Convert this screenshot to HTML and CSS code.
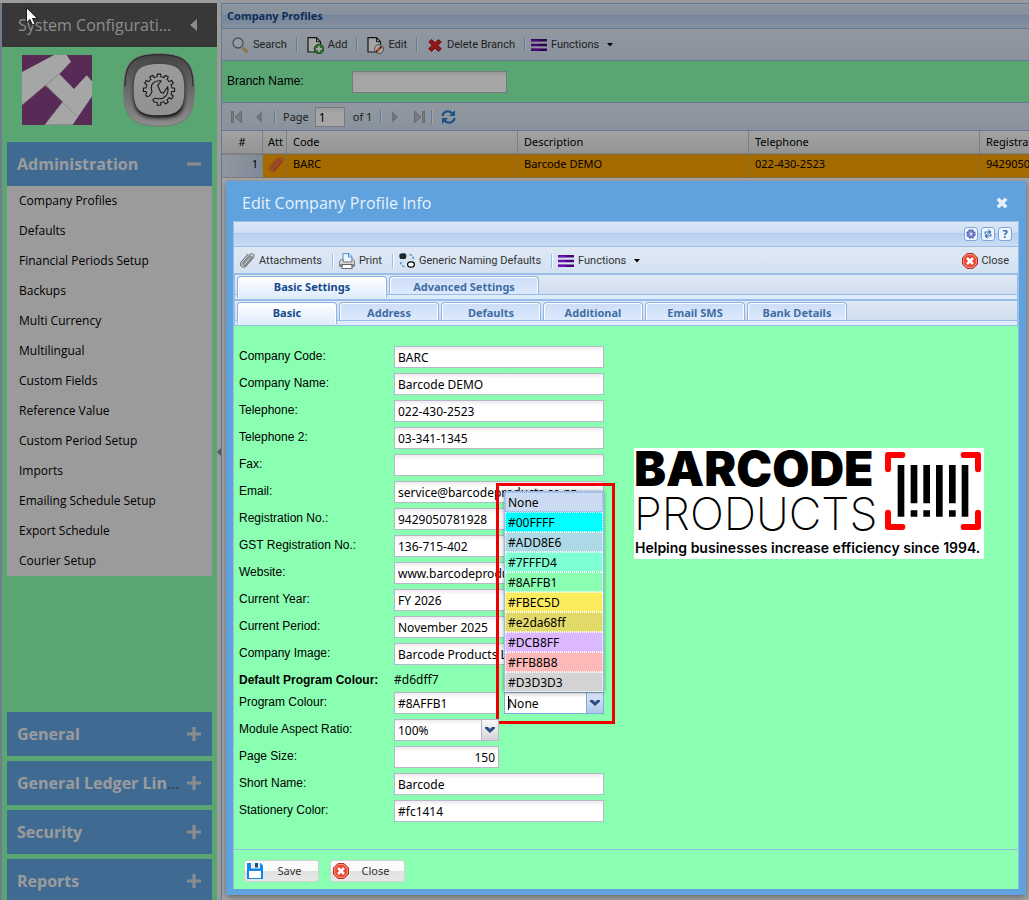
FILE: index.html
```html
<!DOCTYPE html>
<html lang="en">
<head>
<meta charset="utf-8">
<title>Company Profiles</title>
<link rel="stylesheet" href="styles.css">
</head>
<body>
<svg class="defs" aria-hidden="true">
  <symbol id="i-menu" viewBox="0 0 16 14"><path d="M0 1.500h16M0 7h16M0 12.500h16" stroke="#4b0082" stroke-width="3"/><path d="M0 1.500h8M0 7h8M0 12.500h8" stroke="#7a12c4" stroke-width="2"/></symbol>
  <symbol id="i-close" viewBox="0 0 16 16"><path d="M5 .5h6L15.500 5v6L11 15.500H5L.5 11V5z" fill="#e8452f" stroke="#b92c22"/><path d="M5.300 1.700h5.400L14.300 5.300v5.400L10.700 14.300H5.300L1.700 10.700V5.300z" fill="none" stroke="#f9a08f"/><path d="M5 5l6 6M11 5l-6 6" stroke="#fff" stroke-width="2.600"/></symbol>
  <symbol id="i-clip" viewBox="0 0 16 17"><path d="M5 11.500L11.300 4.600c.9-1 2.300.2 1.400 1.200L6.600 12.700c-1.600 1.700-4-.4-2.500-2.100L11 2.700c2.300-2.400 5.400.5 3.400 2.800L7.200 13.900c-2.800 3.200-7.500-.6-4.900-3.900L8.800 2.400" fill="none" stroke="currentColor" stroke-width="1.100" stroke-linecap="round"/></symbol>
  <symbol id="i-plus" viewBox="0 0 14 14"><path d="M1.500 7h11M7 1.500v11" stroke="currentColor" stroke-width="3.200" stroke-linecap="square"/></symbol>
  <symbol id="i-chevron" viewBox="0 0 10 8"><path d="M0 1h3l2 2 2-2h3v1.500L5 7 0 2.500z" fill="#2f4a86"/></symbol>
</svg>

<div class="app">
  <aside class="sidebar">
    <header class="sidebar-head"><h1>System Configurati...</h1>
      <svg width="7" height="12" viewBox="0 0 7 12"><path d="M7 0v12L0 6z" fill="#d8d8d8"/></svg></header>
    <div class="brand">
      <svg width="70" height="70" viewBox="66 165 210 210"><path d="M66 165h210v210H66z" fill="#874286"/><path d="M66 216l96-51h38l13 20-35 37 44 45 38-41 16 18v45l-58 85h-84l54-69-52-49-70 59z" fill="#fff"/><path d="M66 315l72-60 38-33M138 256l50 50 42 42M188 306l-54 69" fill="none" stroke="#bbb" stroke-width="2"/></svg>
      <svg width="72" height="74" viewBox="0 0 216 222">
        <defs><linearGradient id="g1" x2="0" y2="1"><stop offset="0" stop-color="#686868"/><stop offset=".5" stop-color="#a2a2a6"/><stop offset="1" stop-color="#dcdcdc"/></linearGradient>
        <linearGradient id="g2" x2="0" y2="1"><stop offset="0" stop-color="#efefef"/><stop offset="1" stop-color="#dedede"/></linearGradient>
        <filter id="soft" x="-20%" y="-20%" width="140%" height="140%"><feGaussianBlur stdDeviation="6"/></filter>
        <path id="tooth" d="M-10.100-37.700L-5.400-38.600-5.200-46.700H5.200L5.400-38.600 10.100-37.700"/></defs>
        <path d="M108 2C190 2 214 30 214 110S190 219 108 219 2 192 2 110 26 2 108 2z" fill="url(#g1)" stroke="#b4b4b4" stroke-width="3"/>
        <path d="M108 5C186 5 210 32 210 100M6 100C6 32 30 5 108 5" fill="none" stroke="#383838" stroke-width="3"/>
        <path d="M108 40C168 40 183 56 183 120S166 194 108 194 33 178 33 120 48 40 108 40z" fill="#000" filter="url(#soft)"/>
        <path d="M108 33C166 33 184 52 184 110S166 187 108 187 32 170 32 110 50 33 108 33z" fill="url(#g2)"/>
        <g transform="translate(108 110)" fill="none" stroke="#222" stroke-width="3.200" stroke-linejoin="round">
          <use href="#tooth" transform="rotate(-90)"/><use href="#tooth" transform="rotate(-60)"/><use href="#tooth" transform="rotate(-30)"/><use href="#tooth"/><use href="#tooth" transform="rotate(30)"/><use href="#tooth" transform="rotate(60)"/><use href="#tooth" transform="rotate(90)"/><use href="#tooth" transform="rotate(120)"/><use href="#tooth" transform="rotate(150)"/><use href="#tooth" transform="rotate(180)"/>
          <path d="M-37.700 10.100C-44 20-32 25-26 15L-21 6C-29-16-14-29 7-26L-4-13 5 8 13 11 26-9C31 14 16 30-3 27-10 25-18 26-18 31-18 36-14 38-10.100 37.700"/>
        </g>
      </svg>
    </div>
    <nav class="accordion">
      <button class="acc-head"><span>Administration</span><svg width="14" height="14" viewBox="0 0 14 14"><path d="M1.500 7h11" stroke="currentColor" stroke-width="3.200" stroke-linecap="square"/></svg></button>
      <ul class="acc-list">
        <li><a href="#">Company Profiles</a></li><li><a href="#">Defaults</a></li><li><a href="#">Financial Periods Setup</a></li><li><a href="#">Backups</a></li><li><a href="#">Multi Currency</a></li><li><a href="#">Multilingual</a></li><li><a href="#">Custom Fields</a></li><li><a href="#">Reference Value</a></li><li><a href="#">Custom Period Setup</a></li><li><a href="#">Imports</a></li><li><a href="#">Emailing Schedule Setup</a></li><li><a href="#">Export Schedule</a></li><li><a href="#">Courier Setup</a></li>
      </ul>
      <div class="acc-rest">
        <button class="acc-head"><span>General</span><svg width="14" height="14"><use href="#i-plus"/></svg></button>
        <button class="acc-head"><span>General Ledger Lin<i>...</i></span><svg width="14" height="14"><use href="#i-plus"/></svg></button>
        <button class="acc-head"><span>Security</span><svg width="14" height="14"><use href="#i-plus"/></svg></button>
        <button class="acc-head"><span>Reports</span><svg width="14" height="14"><use href="#i-plus"/></svg></button>
      </div>
    </nav>
  </aside>
  <div class="splitter"><svg width="4" height="8" viewBox="0 0 4 8"><path d="M4 0v8L0 4z" fill="#888"/></svg></div>

  <main class="panel">
    <h2 class="panel-title">Company Profiles</h2>
    <div class="toolbar main-tools">
      <button class="tool"><svg width="17" height="17" viewBox="0 0 17 17"><path d="M10.500 10.500l5 5" stroke="#d9b46a" stroke-width="3"/><circle cx="6" cy="6" r="5" fill="#e4effa" stroke="#6a7b9c" stroke-width="1.300"/></svg>Search</button><i class="sep"></i>
      <button class="tool"><svg width="17" height="17" viewBox="0 0 17 17"><path d="M1 .7h8.500l4 4V15H1z" fill="#fff" stroke="#222" stroke-width="1.200"/><path d="M9.500.7v4h4" fill="none" stroke="#222"/><circle cx="12" cy="12" r="4.800" fill="#46a84a" stroke="#247a30"/><path d="M12 9v6M9 12h6" stroke="#fff" stroke-width="1.800"/></svg>Add</button><i class="sep"></i>
      <button class="tool"><svg width="17" height="17" viewBox="0 0 17 17"><path d="M1 .7h8.500l4 4V15H1z" fill="#fff" stroke="#222" stroke-width="1.200"/><path d="M9.500.7v4h4" fill="none" stroke="#222"/><circle cx="12" cy="12" r="4.500" fill="#fff" stroke="#777"/><path d="M9.500 14.500l4-4" stroke="#e66a2a" stroke-width="2.200"/><path d="M13 11l1.500-1.500" stroke="#a22" stroke-width="2.200"/><path d="M9 15l1-1" stroke="#222" stroke-width="1.500"/></svg>Edit</button><i class="sep"></i>
      <button class="tool tool-delete"><svg width="14" height="13" viewBox="0 0 14 13"><path d="M.8 3L3.500.6 7 3.800 10.500.6 13.200 3 9.800 6.300l3.500 3.500-2.800 2.600L7 9l-3.500 3.400L.7 9.800l3.500-3.500z" fill="#e32424" stroke="#9e1212"/></svg>Delete Branch</button><i class="sep"></i>
      <button class="tool tool-menu"><svg width="16" height="12" viewBox="0 0 16 14" preserveAspectRatio="none"><use href="#i-menu" width="16" height="14"/></svg>Functions<svg class="caret" width="6" height="4" viewBox="0 0 6 4"><path d="M0 0h6L3 3.500z"/></svg></button>
    </div>
    <div class="filter"><label for="branch">Branch Name:</label><input class="field" id="branch" type="text"></div>
    <div class="toolbar paging">
      <button class="pg" aria-label="First page"><svg width="11" height="12" viewBox="0 0 11 12"><path d="M.5 0h2v12h-2zM10.500 0v12L4 6z" fill="#b9bfc8" stroke="#949aa5" stroke-width=".8"/></svg></button>
      <button class="pg pg-prev" aria-label="Previous page"><svg width="6" height="12" viewBox="0 0 6 12"><path d="M6 0v12L0 6z" fill="#a9b0ba"/></svg></button><i class="sep"></i>
      <label for="page">Page</label><input class="field page-no" id="page" type="text" value="1"><span class="of">of 1</span><i class="sep"></i>
      <button class="pg" aria-label="Next page"><svg width="6" height="12" viewBox="0 0 6 12"><path d="M0 0v12l6-6z" fill="#a9b0ba"/></svg></button>
      <button class="pg pg-last" aria-label="Last page"><svg width="11" height="12" viewBox="0 0 11 12"><path d="M8.500 0h2v12h-2zM.5 0v12L7 6z" fill="#b9bfc8" stroke="#949aa5" stroke-width=".8"/></svg></button><i class="sep"></i>
      <button class="pg pg-reload" aria-label="Refresh"><svg width="15" height="14" viewBox="0 0 15 14"><path d="M1.500 6C2 1.500 8-.5 11.500 3.500M13.500 8c-.5 4.500-6.500 6.500-10 2.500" fill="none" stroke="#2f7fd0" stroke-width="2.200"/><path d="M14 0v6H8zM1 14V8h6z" fill="#2f7fd0"/></svg></button>
    </div>
    <div class="grid-wrap">
      <table class="grid">
        <colgroup><col class="c-num"><col class="c-att"><col class="c-wide"><col class="c-wide"><col class="c-wide"><col class="c-wide"></colgroup>
        <thead><tr><th class="num">#</th><th class="att">Att</th><th>Code</th><th>Description</th><th>Telephone</th><th>Registration No.</th></tr></thead>
        <tbody><tr><td class="rownum">1</td><td class="att"><svg width="16" height="17" color="#e0584a"><use href="#i-clip"/></svg></td><td>BARC</td><td>Barcode DEMO</td><td>022-430-2523</td><td>9429050781928</td></tr></tbody>
      </table>
    </div>
  </main>
</div>
<div class="mask"></div>
<svg class="pointer" width="12" height="19" viewBox="0 0 12 19"><path d="M.5.700v15l3.500-3.200 2.500 5.500 2.500-1-2.500-5.500h5z" fill="#fff" stroke="#000" stroke-width=".8"/></svg>

<section class="window" role="dialog" aria-labelledby="win-title">
  <header class="win-head"><h2 id="win-title">Edit Company Profile Info</h2>
    <button class="win-close" aria-label="Close window"><svg width="12" height="12" viewBox="0 0 12 12"><path d="M1.800 1.800l8.400 8.400M10.200 1.800l-8.400 8.400" stroke="#e8f1fa" stroke-width="3.600"/></svg></button></header>
  <div class="win-body">
    <div class="strip">
      <button aria-label="Settings"><svg width="10" height="10" viewBox="0 0 10 10"><circle cx="5" cy="5" r="3.900" fill="#9aa3e0" stroke="#5964b0" stroke-width="1.600" stroke-dasharray="2 1.060"/><circle cx="5" cy="5" r="3" fill="#8f9ae0" stroke="#5c68b8" stroke-width=".8"/><circle cx="5" cy="5" r="1.100" fill="#e8ecff"/></svg></button>
      <button aria-label="Reload"><svg width="8" height="10" viewBox="0 0 8 10"><path d="M1.200 5.200V3H5M6.800 4.800V7H3" fill="none" stroke="#3f79b5" stroke-width="1.200"/><path d="M4.500 0l3 3-3 3zM3.500 4l-3 3 3 3z" fill="#3f79b5"/></svg></button>
      <button class="help">?</button>
    </div>
    <div class="toolbar win-tools">
      <button class="tool"><svg width="16" height="17" color="#777"><use href="#i-clip"/></svg>Attachments</button><i class="sep"></i>
      <button class="tool"><svg width="16" height="16" viewBox="0 0 16 16"><path d="M4 8V.6h6l3 2.900V8" fill="#eef6ff" stroke="#4a8fd0"/><path d="M9.500.6v3.500H13" fill="none" stroke="#4a8fd0"/><path d="M2.500 6.500h1.700V9h8.600V6.500h.7q2 .5 2 2.500v4.500H.5V9q0-2 2-2.500z" fill="#d4d4d4" stroke="#777" stroke-width=".9"/><path d="M1 12h14" stroke="#888" stroke-width="2"/><path d="M3.500 11.500h9l.8 4H2.700z" fill="#fff" stroke="#555" stroke-width=".9"/></svg>Print</button><i class="sep"></i>
      <button class="tool"><svg width="16" height="16" viewBox="0 0 16 16"><path d="M.5 1.500C1.500 0 6 0 7 1c.5 2 .5 4-.8 5H1.600C.3 5 .2 3 .5 1.500z" fill="#1c2730"/><ellipse cx="12" cy="11.500" rx="3.400" ry="2.700" fill="#fff" stroke="#000" stroke-width="1.200"/><path d="M10.500 1.500c2.500.5 3.500 2 4 5M1.500 9c.5 2.500 2 4.500 5 5" fill="none" stroke="#4c93cf" stroke-width="1.400" stroke-dasharray="2.500 1.500"/></svg>Generic Naming Defaults</button><i class="sep"></i>
      <button class="tool"><svg width="16" height="12" viewBox="0 0 16 14" preserveAspectRatio="none"><use href="#i-menu" width="16" height="14"/></svg>Functions<svg class="caret" width="6" height="4" viewBox="0 0 6 4"><path d="M0 0h6L3 3.500z"/></svg></button>
      <button class="tool push"><svg width="16" height="16"><use href="#i-close"/></svg>Close</button>
    </div>
    <div class="tabs tabs-outer" role="tablist"><button class="tab active" role="tab">Basic Settings</button><button class="tab" role="tab">Advanced Settings</button></div>
    <div class="tabs tabs-inner" role="tablist"><button class="tab active" role="tab">Basic</button><button class="tab" role="tab">Address</button><button class="tab" role="tab">Defaults</button><button class="tab" role="tab">Additional</button><button class="tab" role="tab">Email SMS</button><button class="tab" role="tab">Bank Details</button></div>
    <div class="content">
      <form class="form">
        <div class="row"><label for="f1">Company Code:</label><input class="field" id="f1" type="text" value="BARC"></div>
        <div class="row"><label for="f2">Company Name:</label><input class="field" id="f2" type="text" value="Barcode DEMO"></div>
        <div class="row"><label for="f3">Telephone:</label><input class="field" id="f3" type="text" value="022-430-2523"></div>
        <div class="row"><label for="f4">Telephone 2:</label><input class="field" id="f4" type="text" value="03-341-1345"></div>
        <div class="row"><label for="f5">Fax:</label><input class="field" id="f5" type="text"></div>
        <div class="row"><label for="f6">Email:</label><input class="field" id="f6" type="text" value="service@barcodeproducts.co.nz"></div>
        <div class="row"><label for="f7">Registration No.:</label><input class="field" id="f7" type="text" value="9429050781928"></div>
        <div class="row"><label for="f8">GST Registration No.:</label><input class="field" id="f8" type="text" value="136-715-402"></div>
        <div class="row"><label for="f9">Website:</label><input class="field" id="f9" type="text" value="www.barcodeproducts.co.nz"></div>
        <div class="row"><label for="f10">Current Year:</label><input class="field" id="f10" type="text" value="FY 2026"></div>
        <div class="row"><label for="f11">Current Period:</label><input class="field" id="f11" type="text" value="November 2025"></div>
        <div class="row"><label for="f12">Company Image:</label><input class="field" id="f12" type="text" value="Barcode Products Logo"></div>
        <div class="row plain"><b>Default Program Colour:</b><output>#d6dff7</output></div>
        <div class="row"><label for="f13">Program Colour:</label>
          <div class="pair"><input class="field" id="f13" type="text" value="#8AFFB1">
            <div class="combo focused">
              <select class="field" aria-label="Preset colour"><option>None</option></select>
              <span class="trigger"><svg width="10" height="8"><use href="#i-chevron"/></svg></span>
              <span class="text-cursor"></span>
              <ul class="options" role="listbox">
                <li class="selected" role="option">None</li><li class="aqua" role="option">#00FFFF</li><li class="lightblue" role="option">#ADD8E6</li><li class="aquamarine" role="option">#7FFFD4</li><li class="mint" role="option">#8AFFB1</li><li class="corn" role="option">#FBEC5D</li><li class="sand" role="option">#e2da68ff</li><li class="mauve" role="option">#DCB8FF</li><li class="pink" role="option">#FFB8B8</li><li class="grey" role="option">#D3D3D3</li>
              </ul>
              <span class="highlight"></span>
            </div>
          </div></div>
        <div class="row half"><label for="f14">Module Aspect Ratio:</label><div class="combo"><select class="field" id="f14"><option>100%</option></select><span class="trigger"><svg width="10" height="8"><use href="#i-chevron"/></svg></span></div></div>
        <div class="row half"><label for="f15">Page Size:</label><input class="field right" id="f15" type="text" value="150"></div>
        <div class="row"><label for="f16">Short Name:</label><input class="field" id="f16" type="text" value="Barcode"></div>
        <div class="row"><label for="f17">Stationery Color:</label><input class="field" id="f17" type="text" value="#fc1414"></div>
      </form>
      <div class="logo">
        <div class="logo-top">
          <div class="logo-words"><div class="logo-bold">BARCODE</div><div class="logo-thin">PRODUCTS</div></div>
          <svg width="96" height="78" viewBox="0 0 288 234"><path d="M9 52V9h43M236 9h43v43M9 182v43h43M236 225h43v-43" fill="none" stroke="#fe0000" stroke-width="18" stroke-linecap="round" stroke-linejoin="round"/><path d="M48 39v155M163 39v155M240 39v155M87 39v115M125 39v115M202 39v115M87 175v19M125 175v19M202 175v19" stroke="#000" stroke-width="20"/></svg>
        </div>
        <div class="logo-tag">Helping businesses increase efficiency since 1994.</div>
      </div>
    </div>
    <footer class="win-foot">
      <button class="btn"><svg width="16" height="16" viewBox="0 0 16 16"><path d="M0 0h13.500L16 2.500V16H0z" fill="#1288ea"/><path d="M4 0h9v5.500H4z" fill="#e8eef4"/><path d="M8 0h3v4.500H8z" fill="#1b4f80"/><path d="M2 8h12v7H2z" fill="#fff"/></svg><span>Save</span></button>
      <button class="btn"><svg width="16" height="16"><use href="#i-close"/></svg><span>Close</span></button>
    </footer>
  </div>
</section>
</body>
</html>
```

FILE: styles.css
```css
* { box-sizing: border-box; }
body { margin: 0; height: 100vh; overflow: hidden; position: relative; background: #efefef; font: 11px/14px Tahoma, "Noto Sans", sans-serif; color: #000; }
button, input, select { font: inherit; color: inherit; margin: 0; }
button { background: none; border: 0; padding: 0; cursor: pointer; white-space: nowrap; }
h1, h2, ul { margin: 0; padding: 0; font-weight: normal; }
ul { list-style: none; }
svg { display: block; flex: none; }
.defs { position: absolute; width: 0; height: 0; }

.app { display: flex; height: 100vh; padding-top: 3px; overflow: hidden; }
.sidebar { flex: none; width: 217px; border-left: 2px solid #b0c0d8; background: #8affb1; display: flex; flex-direction: column; font-family: "Open Sans", sans-serif; }
.sidebar-head { flex: none; height: 44px; background: #565656; color: #d8d8d8; display: flex; align-items: center; justify-content: space-between; padding: 0 20px 0 16px; }
.sidebar-head h1 { font-size: 16px; line-height: 24px; white-space: nowrap; }
.brand { flex: none; display: flex; justify-content: space-between; align-items: center; height: 95px; padding: 0 22px 9px 20px; }
.accordion { flex: 1; display: flex; flex-direction: column; padding: 0 5px; }
.acc-head { flex: none; width: 100%; height: 44px; background: #61a3e1; color: #efefef; display: flex; align-items: center; justify-content: space-between; padding: 0 11px 0 10px; font: bold 16px/22px "Open Sans", sans-serif; }
.acc-head i { color: #555; font-weight: normal; font-style: normal; }
.acc-head svg { color: #d4d8de; }
.acc-list { background: #efefef; font-size: 12px; line-height: 30px; }
.acc-list a { display: block; padding-left: 12px; color: #000; text-decoration: none; }
.acc-rest { display: flex; flex-direction: column; gap: 5px; margin-top: 136px; }
.splitter { flex: none; width: 4px; display: flex; align-items: center; }

.panel { flex: 1; min-width: 0; display: flex; flex-direction: column; border: 1px solid #99bce8; border-width: 1px 0 0 1px; background: #fff; }
.panel-title { height: 25px; padding: 0 5px; font: bold 11px/24px "Noto Sans", sans-serif; color: #15498b; border-bottom: 1px solid #99bce8; }
.panel-title, .strip { background: linear-gradient(#dae7f6, #cddef3 45%, #abc7ec 46%, #b8cfee 51%, #cbddf5); }
.toolbar { display: flex; align-items: center; background: linear-gradient(#dfe9f5, #d3e1f1); color: #333; border-bottom: 1px solid #99bce8; }
.tool { display: flex; align-items: center; gap: 4px; font: 11px/14px Roboto, sans-serif; }
.tool .caret { margin-left: 4px; }
.sep { flex: none; width: 2px; height: 14px; background: #8fc0fa; border-right: 1px solid #fff; }
.main-tools { height: 32px; padding: 1px 10px 0; gap: 9px; }
.tool-delete { gap: 5px; margin-left: 1px; }
.tool-menu { margin-left: -4px; }
.filter { height: 42px; display: flex; align-items: center; background: #8affb1; border-bottom: 1px solid #99bce8; padding: 0 5px; font: 12px/16px "Liberation Sans", Arial, sans-serif; }
.filter label { width: 125px; height: 18px; }
.filter .field { width: 155px; }
.paging { height: 28px; padding: 0 9px; gap: 12px; }
.paging label { margin-left: -5px; }
.paging .page-no { width: 30px; height: 20px; margin-left: -6px; }
.pg-prev { margin-left: 2px; }
.pg-last { margin-left: 4px; }
.paging .of { margin: 0 -4px 0 -4px; }
.paging .of + .sep { margin-right: -2px; }
.pg-last + .sep { margin: 0 -4px 0 -6px; }
.grid-wrap { overflow: hidden; }
.grid { table-layout: fixed; width: 989px; border-collapse: separate; border-spacing: 0; }
.c-num { width: 41px; } .c-att { width: 24px; } .c-wide { width: 231px; }
.grid th { height: 23px; padding: 0 6px; text-align: left; font-weight: normal; background: linear-gradient(#f9f9f9, #e3e4e6); border-right: 1px solid #c5c5c5; border-bottom: 1px solid #c5c5c5; }
.grid td { height: 24px; padding: 0 6px; vertical-align: top; line-height: 18px; background: orange; border: 1px dotted #b0a890; border-width: 1px 1px 1px 0; white-space: nowrap; }
.grid .num { text-align: center; }
.grid .att { padding: 0 0 0 5px; }
.grid td.att { padding-top: 1px; }
.grid .rownum { text-align: right; padding-right: 4px; background: linear-gradient(90deg, #dfe9f5, #c5d3ea); }

.mask { position: absolute; inset: 0; background: rgba(0, 0, 0, .35); }
.pointer { position: absolute; left: 26px; top: 7px; }

.window { position: absolute; left: 226px; right: 3px; top: 181px; padding: 0 7px 6px; background: #5fa2dd; box-shadow: 0 2px 6px rgba(0, 0, 0, .4); }
.win-head { height: 40px; padding: 4px 11px 0 9px; display: flex; align-items: center; justify-content: space-between; color: #e8f1fa; }
.win-head h2 { font: 16px/22px "Open Sans", sans-serif; }
.win-body { border: 1px solid #99bce8; border-bottom: 0; background: #8affb1; }
.strip { height: 25px; border-bottom: 1px solid #99bce8; display: flex; align-items: center; justify-content: flex-end; gap: 3px; padding: 0 6px 1px 0; }
.strip button { width: 14px; height: 14px; border: 1px solid #7da7dc; border-radius: 3px; background: #eef5ff; display: flex; align-items: center; justify-content: center; color: #2f69a5; }
.strip .help { font-weight: bold; }
.win-tools { height: 27px; padding: 1px 9px 0 5px; gap: 10px; }
.win-tools .sep + .tool { margin-left: -5px; }
.win-tools .tool.push { margin-left: auto; gap: 3px; }
.tabs { display: flex; align-items: flex-start; gap: 2px; padding: 1px 2px 0; background: linear-gradient(#dfe9f5, #cddbec); border: 1px solid #99bce8; border-width: 1px 1px 0 1px; position: relative; height: 26px; }
.tabs::after { content: ""; position: absolute; left: 0; right: 0; bottom: 0; height: 4px; background: #deecfd; border: 1px solid #99bce8; border-width: 1px 0; }
.tab { height: 21px; border: 1px solid #8db2e3; border-bottom: 0; border-radius: 4px 4px 0 0; background: linear-gradient(#ccddf6, #e0ecff); box-shadow: inset 1px 1px #fff, inset -1px 0 #fff; font-weight: bold; color: #416da3; }
.tab.active { background: linear-gradient(#fff, #deecfd); color: #15498b; position: relative; z-index: 1; height: 22px; padding-bottom: 1px; }
.tabs-outer .tab { width: 150px; }
.tabs-inner .tab { width: 100px; }
.content { display: flex; border-bottom: 1px solid #99bce8; padding: 20px 5px 27px; font: 12px/16px "Liberation Sans", Arial, sans-serif; }
.form { display: flex; flex-direction: column; gap: 5px; width: 365px; flex: none; }
.row { display: grid; grid-template-columns: 155px 1fr; height: 22px; line-height: 20px; }
.row.plain { height: 17px; }
.plain output { font-family: Tahoma, "Noto Sans", sans-serif; }
.row.half { grid-template-columns: 155px 105px; }
.field { width: 100%; height: 22px; padding: 1px 3px 0; border: 1px solid #b5b8c8; border-radius: 0; outline: 0; background: linear-gradient(#ececec, #fff 5px); font: 12px/18px Tahoma, "Noto Sans", sans-serif; color: #000; appearance: none; }
.field.right { text-align: right; }
.pair { display: grid; grid-template-columns: 105px 100px; gap: 5px; }
.combo { position: relative; }
.trigger { position: absolute; right: 0; top: 0; width: 18px; height: 22px; display: flex; align-items: center; justify-content: center; border: 1px solid #b5b8c8; background: linear-gradient(#fafafa, #d4d4d8); pointer-events: none; }
.focused .field { border-color: #7eadd9; }
.focused .trigger { border-color: #7eadd9; background: linear-gradient(#dbe6f7, #aec7ea); }
.text-cursor { position: absolute; left: 4px; top: 4px; width: 1px; height: 14px; background: #000; }
.options { position: absolute; left: 0; right: 0; bottom: 22px; border: 1px solid #99bce8; border-bottom: 0; box-shadow: 0 0 4px rgba(0, 0, 0, .4); font: 12px/20px Tahoma, "Noto Sans", sans-serif; background: #fff; }
.options li { height: 20px; padding: 0 2px; border: 1px dotted #fff; }
.options .selected { background: #cbdaf0; border-color: #8eabe4; }
.aqua { background: #00ffff; } .lightblue { background: #add8e6; } .aquamarine { background: #7fffd4; } .mint { background: #8affb1; } .corn { background: #fbec5d; }
.sand { background: #e2da68; } .mauve { background: #dcb8ff; } .pink { background: #ffb8b8; } .grey { background: #d3d3d3; }
.highlight { position: absolute; left: -8px; right: -11px; top: -209px; bottom: -10px; border: 3px solid #ee0000; pointer-events: none; }
.logo { width: 350px; height: 111px; flex: none; margin: 102px 0 0 30px; background: #fff; color: #000; }
.logo-top { display: flex; justify-content: space-between; align-items: flex-start; height: 90px; padding: 4px 3px 0 0; }
.logo-words { width: 245px; white-space: nowrap; }
.logo-bold { font: 900 48px/34px Inter, sans-serif; }
.logo-thin { font: 200 45px/34px Inter, sans-serif; margin-top: 11px; }
.logo-tag { font: 600 14px/20px Inter, sans-serif; padding-left: 1px; white-space: nowrap; }
.win-foot { display: flex; gap: 11px; padding: 10px; height: 39px; }
.btn { width: 75px; height: 22px; display: flex; align-items: center; padding: 0 2px; border: 1px solid #d1d1d1; border-radius: 3px; background: linear-gradient(#fff, #f9f9f9 48%, #e2e2e2 52%, #e7e7e7); color: #333; }
.btn span { flex: 1; text-align: center; }
```
